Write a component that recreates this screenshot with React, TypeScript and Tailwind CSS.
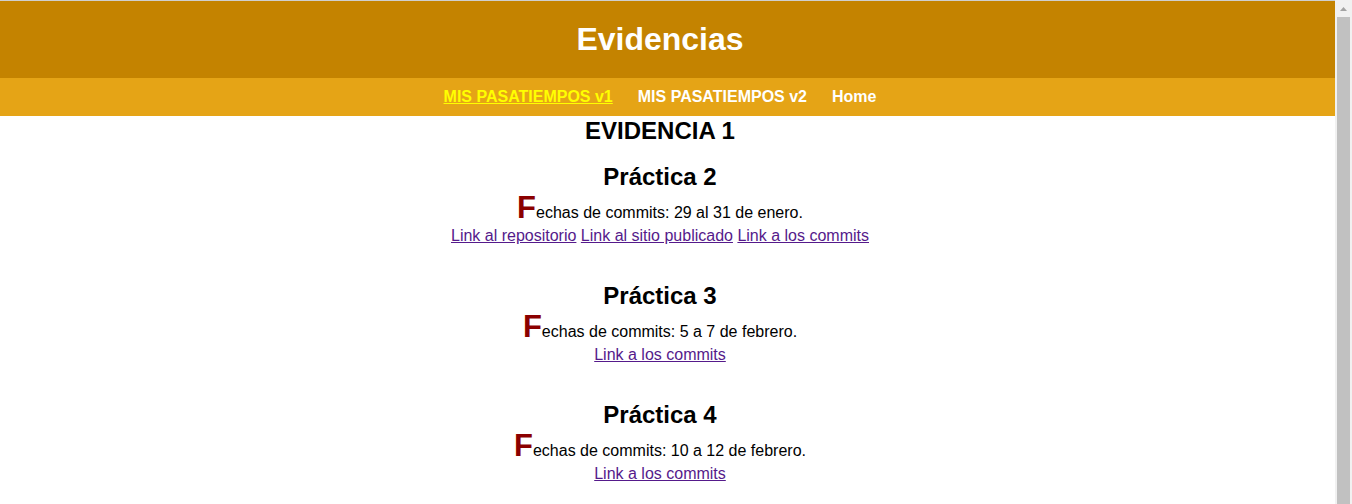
import React from 'react';

interface Practica {
  title: string;
  fechas: string;
  links: string[];
}

const practicas: Practica[] = [
  {
    title: 'Práctica 2',
    fechas: 'echas de commits: 29 al 31 de enero.',
    links: ['Link al repositorio', 'Link al sitio publicado', 'Link a los commits'],
  },
  {
    title: 'Práctica 3',
    fechas: 'echas de commits: 5 a 7 de febrero.',
    links: ['Link a los commits'],
  },
  {
    title: 'Práctica 4',
    fechas: 'echas de commits: 10 a 12 de febrero.',
    links: ['Link a los commits'],
  },
];

// barra de desplazamiento del navegador, tal como sale en la captura
const ScrollBar: React.FC = () => (
  <div className="flex w-[17px] shrink-0 flex-col bg-[#f1f1f1]">
    <div className="flex h-[17px] items-center justify-center">
      <svg width="9" height="6" viewBox="0 0 9 6">
        <polygon points="4.5,1 8,5 1,5" fill="#a3a3a3" />
      </svg>
    </div>
    <div className="mx-[2px] flex-1 bg-[#c1c1c1]" />
  </div>
);

const App: React.FC = () => {
  return (
    <div className="flex h-screen overflow-hidden bg-white text-black font-['Liberation_Sans',Arial,sans-serif]">
      <div className="min-w-0 flex-1 overflow-hidden">
        <div className="h-px bg-[#cfcfcf]" />

        {/* encabezado */}
        <header className="bg-[#c48300] py-[20px] pr-[15px] text-center">
          <h1 className="text-[32px] leading-[37px] font-bold text-white">Evidencias</h1>
        </header>

        <nav className="bg-[#e5a416] py-[10px] pr-[15px]">
          <ul className="flex justify-center gap-[25px] text-[16px] leading-[18px] font-bold text-white">
            <li>
              <a href="#" className="text-[#ffff00] underline">MIS PASATIEMPOS v1</a>
            </li>
            <li>
              <a href="#">MIS PASATIEMPOS v2</a>
            </li>
            <li>
              <a href="#">Home</a>
            </li>
          </ul>
        </nav>

        <main className="pr-[15px] text-center">
          <h2 className="pt-px text-[24px] leading-[28px] font-bold">EVIDENCIA 1</h2>

          <div className="pt-[18px]">
            {practicas.map((p) => (
              <section key={p.title} className="pb-[33px]">
                <h2 className="text-[24px] leading-[28px] font-bold">{p.title}</h2>
                <p className="mt-[1px] text-[16px] leading-[18px]">
                  <span className="text-[31px] leading-none font-bold text-[#8b0000]">F</span>
                  {p.fechas}
                </p>
                <div className="text-[16px] leading-[26px]">
                  {p.links.map((l, i) => (
                    <React.Fragment key={l}>
                      {i > 0 && ' '}
                      <a href="#" className="text-[#551a8b] underline">{l}</a>
                    </React.Fragment>
                  ))}
                </div>
              </section>
            ))}
          </div>
        </main>
      </div>

      <ScrollBar />
    </div>
  );
};

export default App;
